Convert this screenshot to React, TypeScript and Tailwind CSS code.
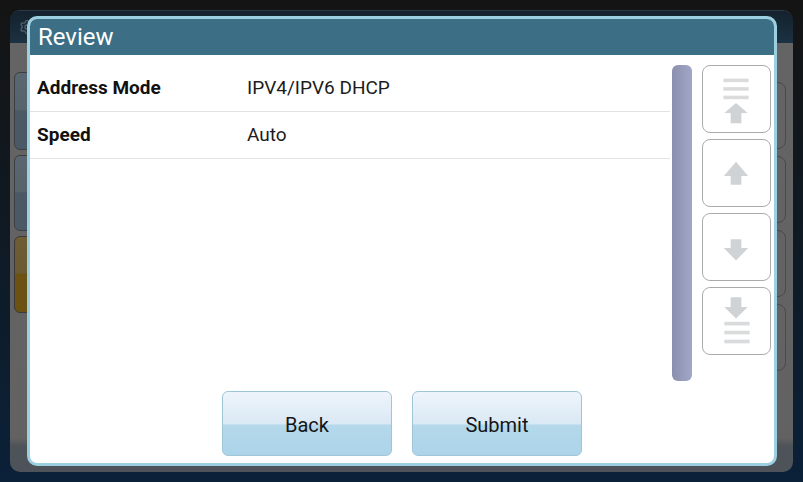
import React from "react";
import { Settings } from "lucide-react";

const ICON = "#cfd3d6";

function TopIcon() {
  return (
    <svg width="69" height="68" viewBox="0 0 69 68">
      <rect x="21" y="13" width="26" height="3.6" fill="#d9dbdd" />
      <rect x="21" y="21.8" width="26" height="3.6" fill="#d9dbdd" />
      <rect x="21" y="30.6" width="26" height="3.6" fill="#d9dbdd" />
      <polygon points="34,38 46,48.5 39.5,48.5 39.5,59 28.5,59 28.5,48.5 22,48.5" fill={ICON} />
    </svg>
  );
}
function UpIcon() {
  return (
    <svg width="69" height="68" viewBox="0 0 69 68">
      <polygon points="34,22.5 46.5,37 39.5,37 39.5,46 28.5,46 28.5,37 21.5,37" fill={ICON} />
    </svg>
  );
}
function DownIcon() {
  return (
    <svg width="69" height="68" viewBox="0 0 69 68">
      <polygon points="28.5,26 39.5,26 39.5,35 46.5,35 34,48 21.5,35 28.5,35" fill={ICON} />
    </svg>
  );
}
function BottomIcon() {
  return (
    <svg width="69" height="68" viewBox="0 0 69 68">
      <polygon points="28.5,9.5 39.5,9.5 39.5,19.5 46,19.5 34,31.5 22,19.5 28.5,19.5" fill={ICON} />
      <rect x="22" y="34.8" width="26" height="3.8" fill="#d9dbdd" />
      <rect x="22" y="44" width="26" height="3.8" fill="#d9dbdd" />
      <rect x="22" y="53.2" width="26" height="3.8" fill="#d9dbdd" />
    </svg>
  );
}

function NavButton({ children }: { children: React.ReactNode }) {
  return (
    <div className="h-[68px] w-[69px] rounded-[8px] border border-[#ababab] bg-white flex items-center justify-center">
      {children}
    </div>
  );
}

function ActionButton({ label }: { label: string }) {
  return (
    <div className="w-[170px] h-[65px] rounded-[6px] border border-[#9fc5d8] bg-[linear-gradient(to_bottom,#eef4fb_0%,#dae9f5_50%,#b5d8eb_53%,#acd4e9_100%)] flex items-center justify-center text-[20px] text-[#151515] pt-[2px]">
      {label}
    </div>
  );
}

export default function App() {
  const rows = [
    ["Address Mode", "IPV4/IPV6 DHCP"],
    ["Speed", "Auto"],
  ];
  return (
    <div
      className="relative w-[803px] h-[482px] p-[10px] bg-[linear-gradient(to_bottom,#141414_0%,#0f1a24_50%,#0b2139_100%)] overflow-hidden"
      style={{ fontFamily: "Roboto, 'Noto Sans', sans-serif" }}
    >
      {/* background window */}
      <div className="h-full rounded-[10px] overflow-hidden flex flex-col border-t border-[#2a3a46]">
        <div className="h-[32px] bg-[linear-gradient(to_bottom,#13222d,#1c3242)] flex items-center pl-[9px]">
          <Settings size={16} color="#52606b" />
        </div>
        <div className="flex-1 bg-[linear-gradient(to_bottom,#646464_0%,#626262_92%,#4d5358_94%,#4d5358_100%)] flex justify-between">
          <div className="pl-[4px] pt-[29px] flex flex-col gap-[5px]">
            <div className="w-[60px] h-[78px] rounded-[6px] border border-[#3a3f44] bg-[linear-gradient(to_bottom,#5a6670_0%,#56626c_48%,#4b5966_50%,#4b5966_100%)]" />
            <div className="w-[60px] h-[76px] rounded-[6px] border border-[#3a3f44] bg-[linear-gradient(to_bottom,#5c6670_0%,#57626b_48%,#4b5966_50%,#4b5966_100%)]" />
            <div className="w-[60px] h-[77px] rounded-[6px] border border-[#3a3a3a] bg-[linear-gradient(to_bottom,#6d5c34_0%,#6a5a32_48%,#6b5213_50%,#6b5213_100%)]" />
          </div>
          <div className="pr-[7px] pt-[39px] flex flex-col gap-[7px]">
            <div className="w-[60px] h-[67px] rounded-[8px] border border-[#4a4a4a]" />
            <div className="w-[60px] h-[67px] rounded-[8px] border border-[#4a4a4a]" />
            <div className="w-[60px] h-[67px] rounded-[8px] border border-[#4a4a4a]" />
            <div className="w-[60px] h-[67px] rounded-[8px] border border-[#4a4a4a]" />
          </div>
        </div>
      </div>

      {/* modal */}
      <div className="absolute left-[27px] top-[16px] w-[750px] h-[450px] border-[3px] border-[#9ccfe0] rounded-[10px] overflow-hidden bg-white flex flex-col">
        <div className="h-[36px] bg-[#3c6e86] text-white text-[24px] pl-[8px] flex items-center">
          Review
        </div>
        <div className="flex-1 flex flex-col pt-[10px]">
          <div className="h-[316px] flex">
            <div className="flex-1 flex flex-col">
              {rows.map(([k, v]) => (
                <div key={k} className="h-[47px] border-b border-[#e2e2e2] flex items-center pl-[7px] text-[19px] pt-[1px]">
                  <div className="w-[210px] font-bold text-[#111]">{k}</div>
                  <div className="text-[#1c1c1c]">{v}</div>
                </div>
              ))}
            </div>
            <div className="w-[20px] ml-[2px] rounded-[6px] bg-[linear-gradient(to_right,#8a8fae,#a2a7c7)]" />
            <div className="ml-[10px] mr-[3px] flex flex-col gap-[6px]">
              <NavButton><TopIcon /></NavButton>
              <NavButton><UpIcon /></NavButton>
              <NavButton><DownIcon /></NavButton>
              <NavButton><BottomIcon /></NavButton>
            </div>
          </div>
          <div className="mt-[10px] flex justify-center gap-[20px]">
            <ActionButton label="Back" />
            <ActionButton label="Submit" />
          </div>
        </div>
      </div>
    </div>
  );
}
